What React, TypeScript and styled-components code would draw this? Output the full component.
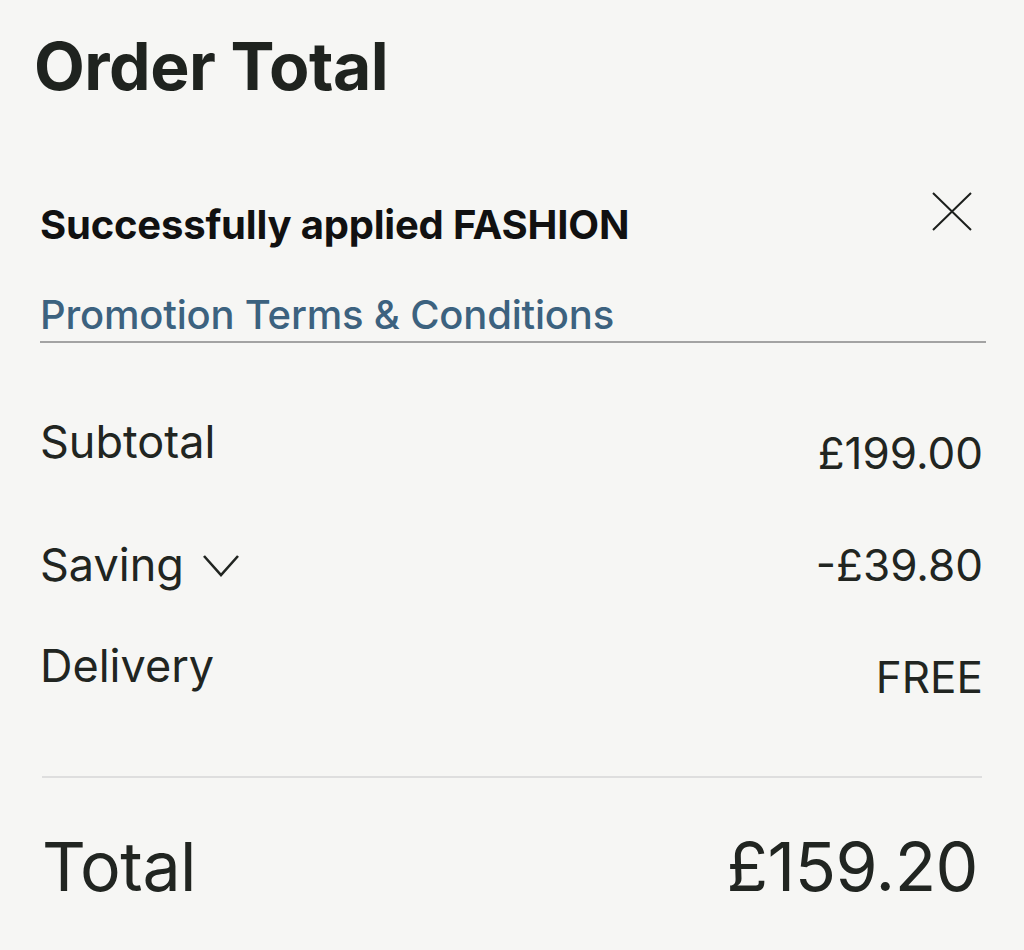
import React from 'react'
import styled, { createGlobalStyle } from 'styled-components'

const GlobalStyle = createGlobalStyle`
  html, body { margin:0; padding:0; background:#f6f6f4; }
  body { font-family: Inter, "Noto Sans", sans-serif; color:#212521; -webkit-font-smoothing:antialiased; }
`

type Line = { label: string, value: string, toggle?: boolean }

const lines: Line[] = [
  { label: 'Subtotal', value: '£199.00' },
  { label: 'Saving', value: '-£39.80', toggle: true },
  { label: 'Delivery', value: 'FREE' },
]

export default function App() {
  return (
    <>
      <GlobalStyle />
      <Page>
        <Title>Order Total</Title>

        <Promo>
          <PromoHead>
            <PromoText>Successfully applied FASHION</PromoText>
            <CloseButton aria-label='Remove promotion'>
              <svg width='42' height='40' viewBox='0 0 42 40'>
                <path d='M2 1 L40 38 M40 1 L2 38' stroke='#1c1f1c' strokeWidth='2' fill='none' />
              </svg>
            </CloseButton>
          </PromoHead>
          <TermsLink href='#'>Promotion Terms &amp; Conditions</TermsLink>
        </Promo>

        <Lines>
          {lines.map(l => (
            <Row key={l.label}>
              <Label $toggle={!!l.toggle}>
                {l.label}
                {l.toggle && (
                  <Chevron width='38' height='24' viewBox='0 0 38 24'>
                    <path d='M2 2 L19 21 L36 2' stroke='#212521' strokeWidth='2.6' fill='none' />
                  </Chevron>
                )}
              </Label>
              <Value>{l.value}</Value>
            </Row>
          ))}
        </Lines>

        <TotalRow>
          <TotalText>Total</TotalText>
          <TotalText>£159.20</TotalText>
        </TotalRow>
      </Page>
    </>
  )
}

const Page = styled.div` padding:26px 38px 40px 40px; min-height:950px; box-sizing:border-box; background:#f6f6f4; `

const Title = styled.h1` margin:0 0 0 -6px; font-size:66px; font-weight:700; line-height:80px; letter-spacing:-0.5px; color:#1f231f; `

const Promo = styled.div` margin-top:84px; border-bottom:2px solid #a3a3a3; padding-bottom:2px; `
  const PromoHead = styled.div` display:flex; justify-content:space-between; align-items:flex-start; `
  const PromoText = styled.div` font-size:40px; font-weight:700; line-height:48px; color:#111; padding-top:11px; letter-spacing:-0.2px; `
  const CloseButton = styled.button` background:none; border:0; padding:0; margin:2px 13px 0 0; cursor:pointer; display:flex; `
  const TermsLink = styled.a` display:block; margin-top:42px; font-size:40px; font-weight:500; line-height:48px; color:#3c627f; text-decoration:none; letter-spacing:-0.2px; `

const Lines = styled.div` display:flex; flex-direction:column; gap:49px; padding:73px 0 73px 0; border-bottom:2px solid #dedede; margin:0 4px 0 2px; `
  const Row = styled.div` display:flex; justify-content:space-between; align-items:flex-start; `
  const Label = styled.div<{ $toggle: boolean }>` display:flex; align-items:center; gap:18px; font-size:45px; line-height:52px; font-weight:400; margin-left:-2px; padding-top:${p => p.$toggle ? '11px' : '0'}; `
  const Chevron = styled.svg` margin-top:2px; `
  const Value = styled.div` font-size:44px; line-height:52px; padding-top:11px; margin-right:-1px; `

const TotalRow = styled.div` display:flex; justify-content:space-between; align-items:center; padding:46px 8px 0 2px; `
  const TotalText = styled.div` font-size:68px; line-height:84px; font-weight:400; letter-spacing:-0.5px; `
